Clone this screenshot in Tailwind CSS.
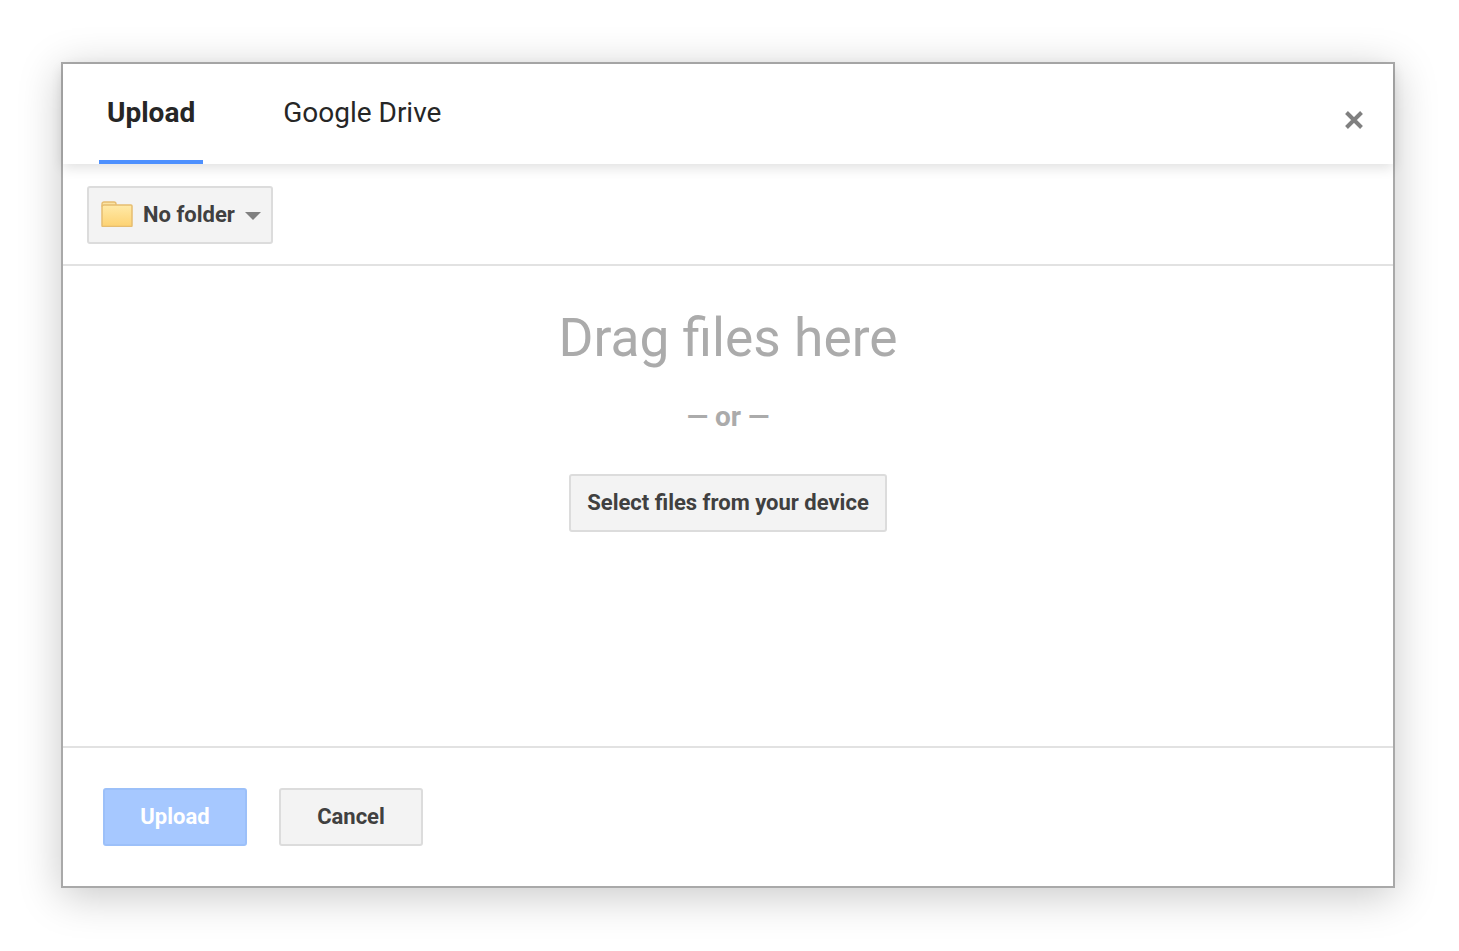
<!DOCTYPE html>
<html lang="en">
<head>
    <meta charset="UTF-8">
    <title>Upload</title>
    <script src="https://cdn.jsdelivr.net/npm/@tailwindcss/browser@4"></script>
</head>
<body class="bg-white h-[951px] overflow-hidden font-['Roboto',sans-serif]">
    <div class="pl-[61px] pt-[62px]">
        <!-- Dialog -->
        <div class="w-[1334px] h-[826px] bg-white border-2 border-[#a9a9a9] flex flex-col shadow-[0_8px_40px_rgba(0,0,0,0.22)]">

            <!-- Tabs -->
            <div class="relative z-10 h-[100px] shrink-0 flex pl-9 bg-white shadow-[0_4px_12px_rgba(0,0,0,0.12)]">
                <div class="h-full px-2 pt-[29px] border-b-4 border-[#4d90fe] text-[28px] leading-[40px] font-bold text-[#262626]">Upload</div>
                <div class="h-full ml-[72px] px-2 pt-[29px] text-[28px] leading-[40px] text-[#262626]">Google Drive</div>
                <svg class="absolute left-[1281px] top-[46px] w-5 h-5" viewBox="0 0 20 20" fill="none" stroke="#808080" stroke-width="4">
                    <path d="M2.5 2.5 17.5 17.5M17.5 2.5 2.5 17.5"/>
                </svg>
            </div>

            <!-- Folder bar -->
            <div class="h-[102px] shrink-0 border-b-2 border-[#e2e2e2] pl-6 pt-[22px]">
                <button class="w-[186px] h-[58px] flex items-center pl-3 pb-[2px] rounded-[3px] border-2 border-[#dcdcdc] bg-[#f3f3f3] text-[22px] font-bold text-[#404040]">
                    <svg class="w-8 h-[26px] mr-[10px] shrink-0" viewBox="0 0 32 26">
                        <defs>
                            <linearGradient id="folderFill" x1="0" y1="0" x2="0" y2="1">
                                <stop offset="0" stop-color="#ffeaa8"/>
                                <stop offset="1" stop-color="#fdd272"/>
                            </linearGradient>
                        </defs>
                        <path d="M1 5V3a2 2 0 0 1 2-2h10a2 2 0 0 1 2 2v2z" fill="#fbe3a2" stroke="#e6bd70" stroke-width="1.4"/>
                        <path d="M1 24.5V6a2 2 0 0 1 2-2h27a1 1 0 0 1 1 1v19.5a1 1 0 0 1-1 1H2a1 1 0 0 1-1-1z" fill="url(#folderFill)" stroke="#e6bd70" stroke-width="1.5"/>
                    </svg>
                    <span>No folder</span>
                    <span class="ml-[10px] mt-[3px] w-0 h-0 border-x-8 border-x-transparent border-t-[8px] border-t-[#808080]"></span>
                </button>
            </div>

            <!-- Drop zone -->
            <div class="flex-1 flex flex-col items-center pt-[39px]">
                <div class="text-[53.3px] leading-[66px] font-[450] text-[#ababab]">Drag files here</div>
                <div class="mt-[28px] text-[28px] leading-[36px] font-bold text-[#ababab]">— or —</div>
                <button class="mt-[39px] w-[318px] h-[58px] pb-[2px] rounded-[3px] border-2 border-[#dcdcdc] bg-[#f3f3f3] text-[22px] font-bold text-[#404040]">Select files from your device</button>
            </div>

            <!-- Footer -->
            <div class="h-[140px] shrink-0 border-t-2 border-[#e2e2e2] flex gap-8 pl-10 pt-10">
                <button class="w-36 h-[58px] pb-[2px] rounded-[3px] border-2 border-[#9cc0f9] bg-[#a6c8ff] text-[22px] font-bold text-white">Upload</button>
                <button class="w-36 h-[58px] pb-[2px] rounded-[3px] border-2 border-[#dcdcdc] bg-[#f3f3f3] text-[22px] font-bold text-[#404040]">Cancel</button>
            </div>
        </div>
    </div>
</body>
</html>
